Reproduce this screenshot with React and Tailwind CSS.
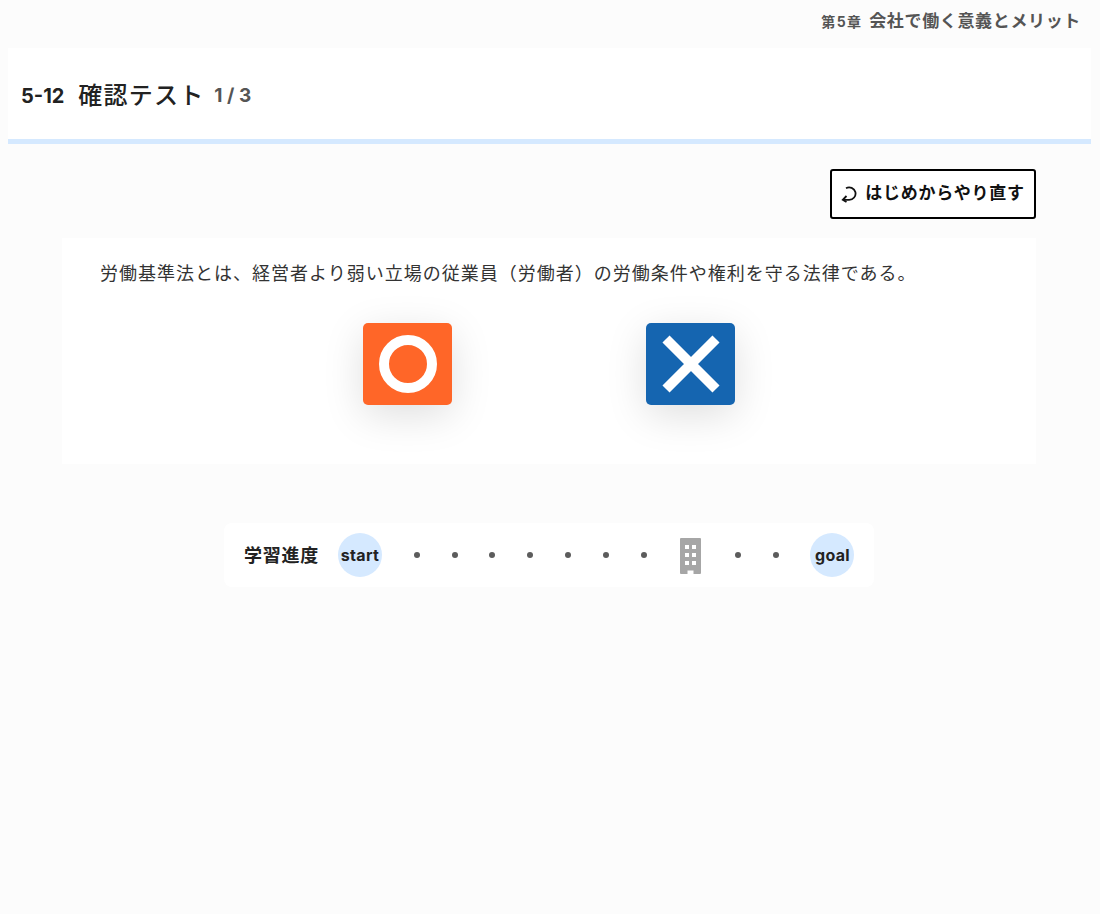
const font = { fontFamily: 'Inter, "Noto Sans CJK JP", sans-serif' }

function Dot() {
  return (
    <div className="w-[37.8px] flex justify-center">
      <div className="w-[6px] h-[6px] rounded-full bg-[#5c5c5c]" />
    </div>
  )
}

function Building() {
  return (
    <svg width="21" height="36" viewBox="0 0 21 36" className="mt-[1px]">
      <path d="M1 0h19a1 1 0 0 1 1 1v34a1 1 0 0 1-1 1h-6.500v-3.500h-6V36H1a1 1 0 0 1-1-1V1a1 1 0 0 1 1-1z" fill="#a6a6a6" />
      {[7, 15, 23].map(y => (
        <g key={y} fill="#fff">
          <rect x="5" y={y} width="4" height="4" />
          <rect x="12" y={y} width="4" height="4" />
        </g>
      ))}
    </svg>
  )
}

export default function App() {
  return (
    <div style={font} className="min-h-[914px] bg-[#fcfcfc] text-[#222]">
      <div className="h-[48px] pt-[9px] pr-[19px] flex justify-end items-baseline gap-[7px] font-bold text-[#555]">
        <span className="text-[14px] tracking-[1.3px]">第5章</span>
        <span className="text-[17px] tracking-[0.65px]">会社で働く意義とメリット</span>
      </div>

      <div className="ml-2 mr-[9px] h-[96px] bg-white border-b-[5px] border-[#d5e9ff] pl-[13px] pt-[5px] flex items-center">
        <span className="text-[20px] font-bold">5-12</span>
        <span className="ml-[14px] text-[24px] font-medium tracking-[1.2px]">確認テスト</span>
        <span className="ml-[10px] text-[19px] font-bold text-[#555]">1 / 3</span>
      </div>

      <div className="mt-[25px] mr-[64px] flex justify-end">
        <button className="w-[206px] h-[50px] border-2 border-black rounded-[3px] bg-white flex items-center justify-center gap-[7px] text-[17px] font-bold text-[#111] tracking-[0.7px]">
          <svg width="17" height="17" viewBox="0 0 17 17" fill="none" stroke="#111" strokeWidth="1.8">
            <path d="M5 2.200a6.400 6.200 0 1 1 3 11.600H2" />
            <path d="M5.500 10 1.800 13.800 5.500 16" />
          </svg>
          はじめからやり直す
        </button>
      </div>

      <div className="mt-[19px] ml-[62px] w-[974px] h-[226px] bg-white pt-[24px] pl-[38px]">
        <p className="text-[18px] leading-[24px] text-[#333] tracking-[1px]">
          労働基準法とは、経営者より弱い立場の従業員（労働者）の労働条件や権利を守る法律である。
        </p>
        <div className="mt-[37px] ml-[263px] flex gap-[194px]">
          <button className="w-[89px] h-[82px] rounded-[5px] bg-[#ff6628] shadow-[0_10px_40px_rgba(0,0,0,0.13)] flex items-center justify-center">
            <svg width="58" height="58" viewBox="0 0 58 58">
              <circle cx="29" cy="29" r="24" fill="none" stroke="#fff" strokeWidth="10" />
            </svg>
          </button>
          <button className="w-[89px] h-[82px] rounded-[5px] bg-[#1565b0] shadow-[0_10px_40px_rgba(0,0,0,0.13)] flex items-center justify-center">
            <svg width="58" height="58" viewBox="0 0 58 58">
              <path d="M4 4 54 54M54 4 4 54" fill="none" stroke="#fff" strokeWidth="10" />
            </svg>
          </button>
        </div>
      </div>

      <div className="mt-[59px] ml-[224px] w-[650px] h-[64px] bg-white rounded-[8px] pl-[20px] flex items-center">
        <span className="w-[94px] text-[18px] font-bold tracking-[0.75px]">学習進度</span>
        <div className="w-[44px] h-[44px] rounded-full bg-[#d5e9ff] flex items-center justify-center text-[16px] font-bold tracking-[0.3px]">start</div>
        <div className="ml-[16px] flex items-center">
          <Dot /><Dot /><Dot /><Dot /><Dot /><Dot /><Dot />
          <div className="w-[56.300px] flex justify-center"><Building /></div>
          <Dot /><Dot />
        </div>
        <div className="ml-[16px] w-[44px] h-[44px] rounded-full bg-[#d5e9ff] flex items-center justify-center text-[16px] font-bold tracking-[0.3px]">goal</div>
      </div>
    </div>
  )
}
